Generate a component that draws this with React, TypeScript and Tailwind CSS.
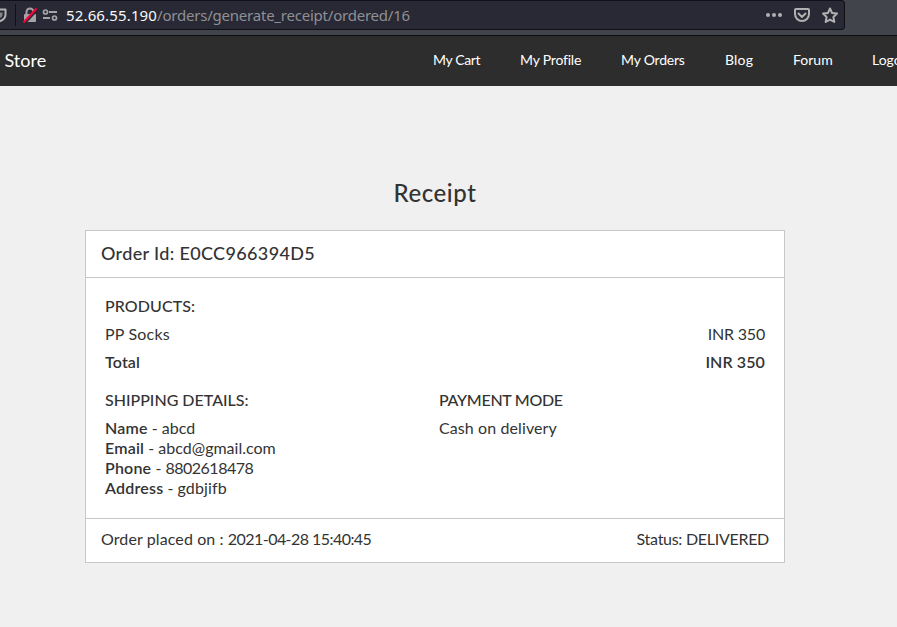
import type { ReactNode } from 'react';

const nav = [
  { label: 'My Cart', cls: 'w-[87px] tracking-[-0.35px]' },
  { label: 'My Profile', cls: 'w-[101px] tracking-[-0.2px]' },
  { label: 'My Orders', cls: 'w-[104px] tracking-[-0.2px]' },
  { label: 'Blog', cls: 'w-[68px] tracking-[0.2px]' },
  { label: 'Forum', cls: 'w-[79px]' },
  { label: 'Logout', cls: 'w-[60px]' },
];

function Detail({ name, children }: { name: string; children: ReactNode }) {
  return (
    <div className="h-5 leading-5">
      <span className="font-semibold tracking-[0.2px]">{name}</span> - {children}
    </div>
  );
}

function AddressBar() {
  return (
    <div className="flex h-[36px] items-start border-b border-[#0c0c0d] bg-[#42444c]">
      <div className="flex h-[30px] w-[845px] items-center rounded-r-[4px] border border-l-0 border-[#101018] bg-[#282934]">
        <svg width="60" height="28" viewBox="0 1 60 28" fill="none">
          <path d="M-1 9.500H5.500V14.500Q5.500 19.500-1 21.500" stroke="#b1b1b3" strokeWidth="2" strokeLinejoin="round" />
          <path d="M0 12.500H2.500V15Q2.500 17 0 18Z" fill="#85858a" />
          <path d="M15.500 4V26" stroke="#101018" />
          <path d="M26.500 14V12a3.500 3.500 0 0 1 7 0V14" stroke="#a4a4a8" strokeWidth="2" />
          <rect x="24" y="14" width="12" height="8" rx="1" fill="#a4a4a8" />
          <path d="M24.500 23.500L37.500 9.500" stroke="#282934" strokeWidth="2.500" />
          <path d="M23.500 22.500L36.500 8.500" stroke="#ff0039" strokeWidth="2" />
          <circle cx="45.500" cy="12" r="2" stroke="#a4a4a8" strokeWidth="1.700" />
          <path d="M49 12H57M43 18H50" stroke="#a4a4a8" strokeWidth="2" />
          <circle cx="54.500" cy="18" r="2" stroke="#a4a4a8" strokeWidth="1.700" />
        </svg>
        <div className="ml-[6px] flex-1 whitespace-nowrap font-['Noto_Sans',sans-serif] text-[15px] leading-[28px] tracking-[-0.22px] text-[#8f8f96]">
          <span className="tracking-[0.15px] text-[#f9f9fa]">52.66.55.190</span>/orders/generate_receipt/ordered/16
        </div>
        <svg width="84" height="28" viewBox="760 1 84 28" fill="none">
          <g fill="#b1b1b3">
            <circle cx="768" cy="15" r="2" />
            <circle cx="774" cy="15" r="2" />
            <circle cx="780" cy="15" r="2" />
          </g>
          <path d="M796 9H808a1 1 0 0 1 1 1V14a7 7 0 0 1-14 0V10a1 1 0 0 1 1-1Z" stroke="#b1b1b3" strokeWidth="2" />
          <path d="M798.500 13.500L802 17L805.500 13.500" stroke="#b1b1b3" strokeWidth="2" strokeLinecap="round" strokeLinejoin="round" />
          <path d="M830 8.500L832.100 13L837 13.600L833.400 17L834.300 22L830 19.600L825.700 22L826.600 17L823 13.600L827.900 13Z" stroke="#b1b1b3" strokeWidth="2" strokeLinejoin="round" />
        </svg>
      </div>
    </div>
  );
}

export default function App() {
  return (
    <div className="h-[627px] w-[897px] overflow-hidden bg-[#f0f0f0] font-[Lato,sans-serif] text-[16px] text-[#333]">
      <AddressBar />
      <nav className="flex h-[50px] items-center overflow-hidden whitespace-nowrap bg-[#2d2d2d] pb-[2px] text-white">
        <div className="w-[433px] shrink-0 pl-[4.5px] text-[18px]">Store</div>
        {nav.map((n) => (
          <a key={n.label} className={`${n.cls} shrink-0 pb-[2px] text-[14px]`}>{n.label}</a>
        ))}
      </nav>
      <main className="ml-[85px] w-[700px]">
        <h1 className="pt-[89px] text-center text-[24px] font-medium leading-[36px] tracking-[0.6px]">Receipt</h1>
        <section className="mt-[19px] border border-[#c8c8c8] bg-white">
          <header className="h-[47px] border-b border-[#c8c8c8] px-[15px] text-[18px] font-medium leading-[45px] tracking-[0.35px]">
            Order Id: E0CC966394D5
          </header>
          <div className="h-[241px] border-b border-[#c8c8c8] px-[19px] pt-[14px] leading-[28px]">
            <h2 className="font-medium tracking-[0.1px]">PRODUCTS:</h2>
            <div className="flex justify-between"><span className="tracking-[0.2px]">PP Socks</span><span className="tracking-[-0.2px]">INR 350</span></div>
            <div className="flex justify-between font-semibold"><span className="tracking-[0.15px]">Total</span><span className="tracking-[0.1px]">INR 350</span></div>
            <div className="mt-[10px] flex">
              <div className="w-[334px]">
                <h2 className="mb-[4px] font-medium">SHIPPING DETAILS:</h2>
                <Detail name="Name">abcd</Detail>
                <Detail name="Email">abcd@gmail.com</Detail>
                <Detail name="Phone"><span className="tracking-[-0.5px]">8802618478</span></Detail>
                <Detail name="Address"><span className="tracking-[0.15px]">gdbjifb</span></Detail>
              </div>
              <div>
                <h2 className="font-medium tracking-[-0.3px]">PAYMENT MODE</h2>
                <p className="tracking-[0.1px]">Cash on delivery</p>
              </div>
            </div>
          </div>
          <footer className="flex h-[43px] justify-between px-[15px] leading-[40px]">
            <span><span className="tracking-[0.1px]">Order placed on : </span><span className="tracking-[-0.55px]">2021-04-28 15:40:45</span></span>
            <span className="tracking-[-0.28px]">Status: DELIVERED</span>
          </footer>
        </section>
      </main>
    </div>
  );
}
